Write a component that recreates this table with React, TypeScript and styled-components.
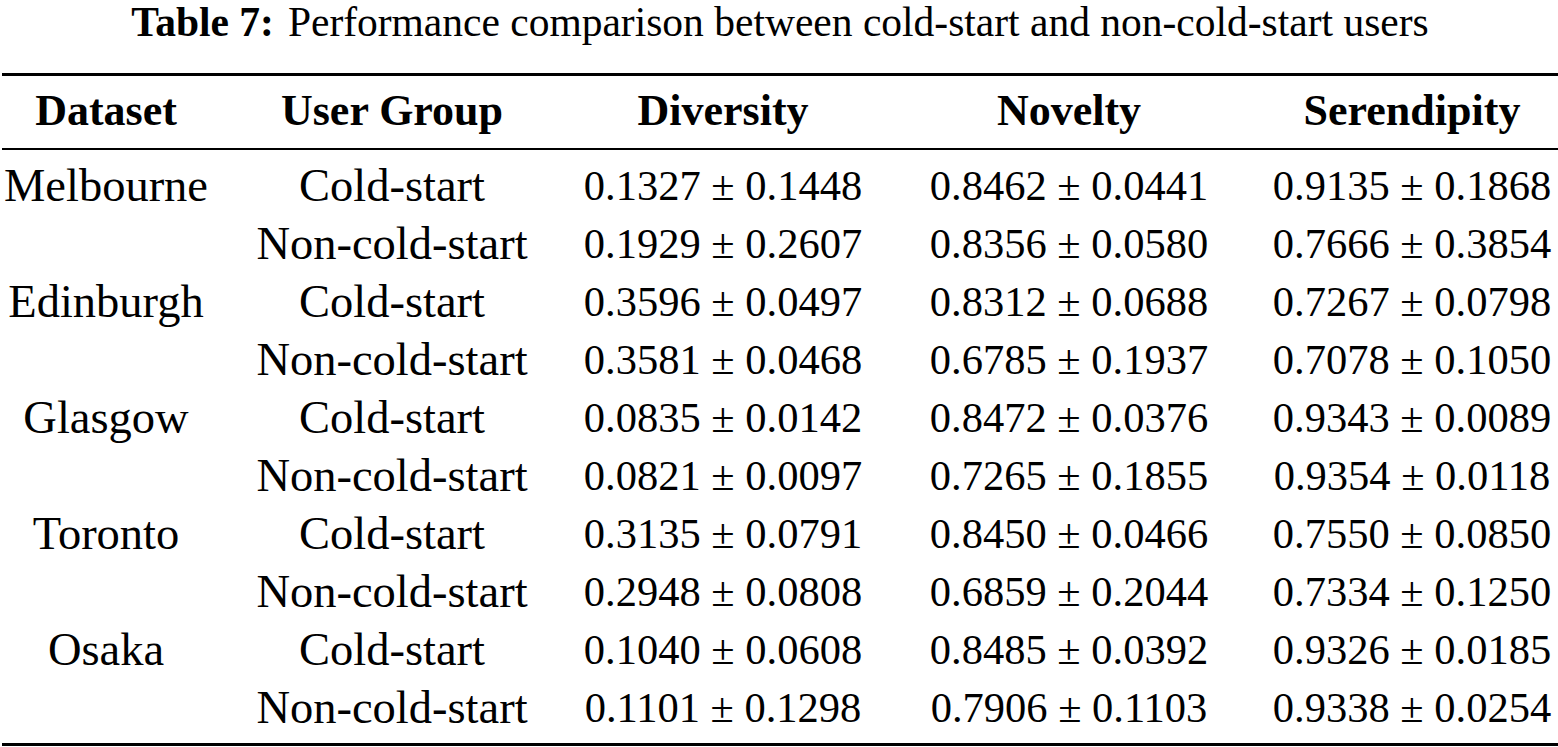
import React from "react";
import styled, { createGlobalStyle } from "styled-components";

const GlobalStyle = createGlobalStyle`
  html, body {
    margin: 0;
    padding: 0;
    background: #ffffff;
  }
  body {
    font-family: "Liberation Serif", "DejaVu Serif", serif;
    color: #000;
  }
`;

interface RowData {
  dataset: string;
  group: string;
  diversity: string;
  novelty: string;
  serendipity: string;
}

const rows: RowData[] = [
  { dataset: "Melbourne", group: "Cold-start", diversity: "0.1327 ± 0.1448", novelty: "0.8462 ± 0.0441", serendipity: "0.9135 ± 0.1868" },
  { dataset: "", group: "Non-cold-start", diversity: "0.1929 ± 0.2607", novelty: "0.8356 ± 0.0580", serendipity: "0.7666 ± 0.3854" },
  { dataset: "Edinburgh", group: "Cold-start", diversity: "0.3596 ± 0.0497", novelty: "0.8312 ± 0.0688", serendipity: "0.7267 ± 0.0798" },
  { dataset: "", group: "Non-cold-start", diversity: "0.3581 ± 0.0468", novelty: "0.6785 ± 0.1937", serendipity: "0.7078 ± 0.1050" },
  { dataset: "Glasgow", group: "Cold-start", diversity: "0.0835 ± 0.0142", novelty: "0.8472 ± 0.0376", serendipity: "0.9343 ± 0.0089" },
  { dataset: "", group: "Non-cold-start", diversity: "0.0821 ± 0.0097", novelty: "0.7265 ± 0.1855", serendipity: "0.9354 ± 0.0118" },
  { dataset: "Toronto", group: "Cold-start", diversity: "0.3135 ± 0.0791", novelty: "0.8450 ± 0.0466", serendipity: "0.7550 ± 0.0850" },
  { dataset: "", group: "Non-cold-start", diversity: "0.2948 ± 0.0808", novelty: "0.6859 ± 0.2044", serendipity: "0.7334 ± 0.1250" },
  { dataset: "Osaka", group: "Cold-start", diversity: "0.1040 ± 0.0608", novelty: "0.8485 ± 0.0392", serendipity: "0.9326 ± 0.0185" },
  { dataset: "", group: "Non-cold-start", diversity: "0.1101 ± 0.1298", novelty: "0.7906 ± 0.1103", serendipity: "0.9338 ± 0.0254" },
];

const headers = ["Dataset", "User Group", "Diversity", "Novelty", "Serendipity"];

const Page = styled.div`
  width: 1558px;
  height: 747px;
  display: flex;
  flex-direction: column;
  overflow: hidden;
`;

const Caption = styled.div`
  height: 73px;
  display: flex;
  justify-content: center;
  align-items: flex-start;
  font-size: 41.5px;
  line-height: 44px;
  padding-left: 2px;
  box-sizing: border-box;
`;

const CaptionLabel = styled.span`
  font-weight: 700;
  margin-right: 14px;
`;

const Table = styled.div`
  border-top: 3px solid #000;
  border-bottom: 3px solid #000;
  margin-left: 2px;
`;

const Grid = styled.div<{ $head?: boolean }>`
  display: grid;
  grid-template-columns: 208px 364px 298px 394px 292px;
  ${(p) =>
    p.$head
      ? `
    height: 74px;
    align-items: center;
    font-size: 44px;
    font-weight: 700;
    border-bottom: 2px solid #000;
    padding-bottom: 4px;
    box-sizing: border-box;
  `
      : ``}
`;

const Body = styled.div`
  padding: 7px 0 6px;
`;

const Cell = styled.div<{ $numeric?: boolean }>`
  text-align: center;
  height: 58px;
  line-height: 58px;
  white-space: nowrap;
  font-size: ${(p) => (p.$numeric ? "42.5px" : "46.5px")};
`;

const HeadCell = styled.div`
  text-align: center;
  white-space: nowrap;
`;

export default function App() {
  return (
    <Page>
      <GlobalStyle />
      <Caption>
        <CaptionLabel>Table 7:</CaptionLabel>
        Performance comparison between cold-start and non-cold-start users
      </Caption>
      <Table>
        <Grid $head>
          {headers.map((h) => (
            <HeadCell key={h}>{h}</HeadCell>
          ))}
        </Grid>
        <Body>
          {rows.map((r, i) => (
            <Grid key={i}>
              <Cell>{r.dataset}</Cell>
              <Cell>{r.group}</Cell>
              <Cell $numeric>{r.diversity}</Cell>
              <Cell $numeric>{r.novelty}</Cell>
              <Cell $numeric>{r.serendipity}</Cell>
            </Grid>
          ))}
        </Body>
      </Table>
    </Page>
  );
}
